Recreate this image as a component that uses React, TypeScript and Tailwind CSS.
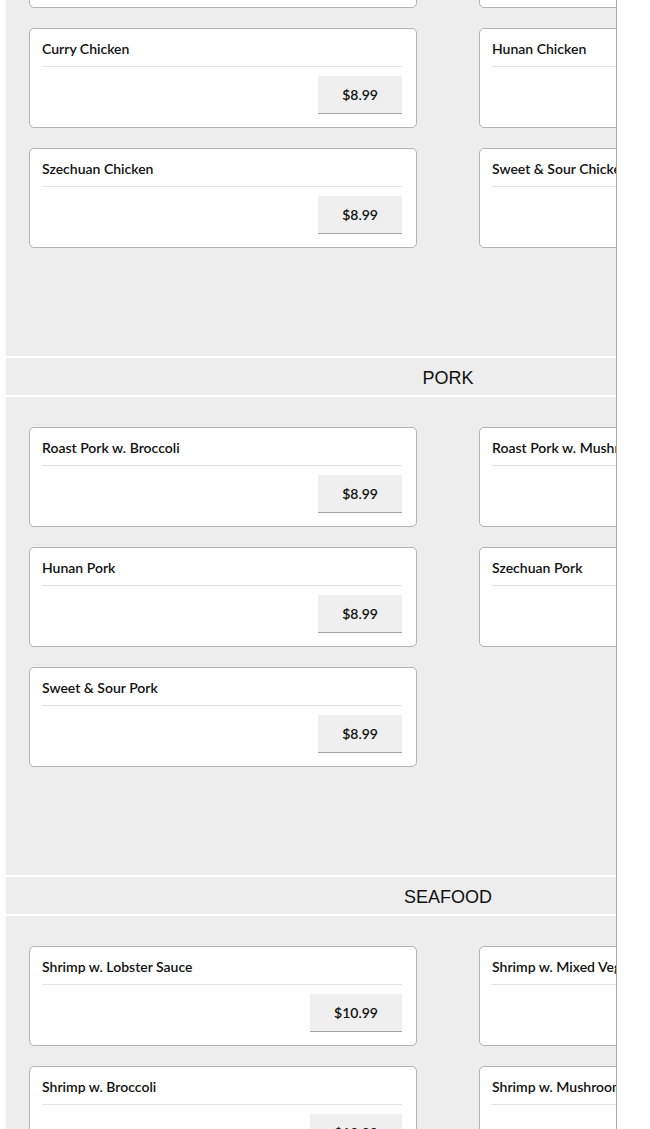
const sections = [
  {
    name: "",
    items: [
      { name: "Sesame Chicken", price: "$8.99" },
      { name: "General Tso's Chicken", price: "$8.99" },
      { name: "Curry Chicken", price: "$8.99" },
      { name: "Hunan Chicken", price: "$8.99" },
      { name: "Szechuan Chicken", price: "$8.99" },
      { name: "Sweet & Sour Chicken", price: "$8.99" },
    ],
  },
  {
    name: "PORK",
    items: [
      { name: "Roast Pork w. Broccoli", price: "$8.99" },
      { name: "Roast Pork w. Mushroom", price: "$8.99" },
      { name: "Hunan Pork", price: "$8.99" },
      { name: "Szechuan Pork", price: "$8.99" },
      { name: "Sweet & Sour Pork", price: "$8.99" },
    ],
  },
  {
    name: "SEAFOOD",
    items: [
      { name: "Shrimp w. Lobster Sauce", price: "$10.99" },
      { name: "Shrimp w. Mixed Vegetables", price: "$10.99" },
      { name: "Shrimp w. Broccoli", price: "$10.99" },
      { name: "Shrimp w. Mushroom", price: "$10.99" },
    ],
  },
];

function MenuCard({ name, price }: { name: string; price: string }) {
  return (
    <div className="h-[100px] rounded-[5px] border border-[#b3b3b3] bg-white pl-[12px] pr-[14px] pt-[9px]">
      <div className="whitespace-nowrap border-b border-[#e2e2e2] pb-[6px] text-[14px] font-semibold leading-[22px] text-[#111]">
        {name}
      </div>
      <div className="mt-[9px] flex justify-end">
        <div className="flex h-[38px] items-center border-b border-[#a3a3a3] bg-[#efefef] px-[24px] text-[14px] font-semibold text-[#111]">
          {price}
        </div>
      </div>
    </div>
  );
}

export default function App() {
  return (
    <div
      className="h-[1129px] w-[650px] overflow-hidden bg-white"
      style={{ fontFamily: "Lato, 'Noto Sans', sans-serif" }}
    >
      <div className="ml-[6px] h-full w-[611px] overflow-hidden border-r border-[#a8a8a8] bg-[#ededed]">
        <div className="w-[884px]">
          {sections.map((s, i) => (
            <section key={i}>
              {s.name && (
                <div
                  className="flex h-[41px] items-center justify-center border-y-2 border-white pt-[3px] text-[18px] text-[#111]"
                  style={{ fontFamily: "'Liberation Sans', Arial, sans-serif" }}
                >
                  {s.name}
                </div>
              )}
              <div
                className={
                  i === 0
                    ? "-mt-[92px] grid grid-cols-2 gap-x-[62px] gap-y-[20px] px-[23px] pb-[108px]"
                    : "grid grid-cols-2 gap-x-[62px] gap-y-[20px] px-[23px] pt-[30px] pb-[108px]"
                }
              >
                {s.items.map((it) => (
                  <MenuCard key={it.name} name={it.name} price={it.price} />
                ))}
              </div>
            </section>
          ))}
        </div>
      </div>
    </div>
  );
}
